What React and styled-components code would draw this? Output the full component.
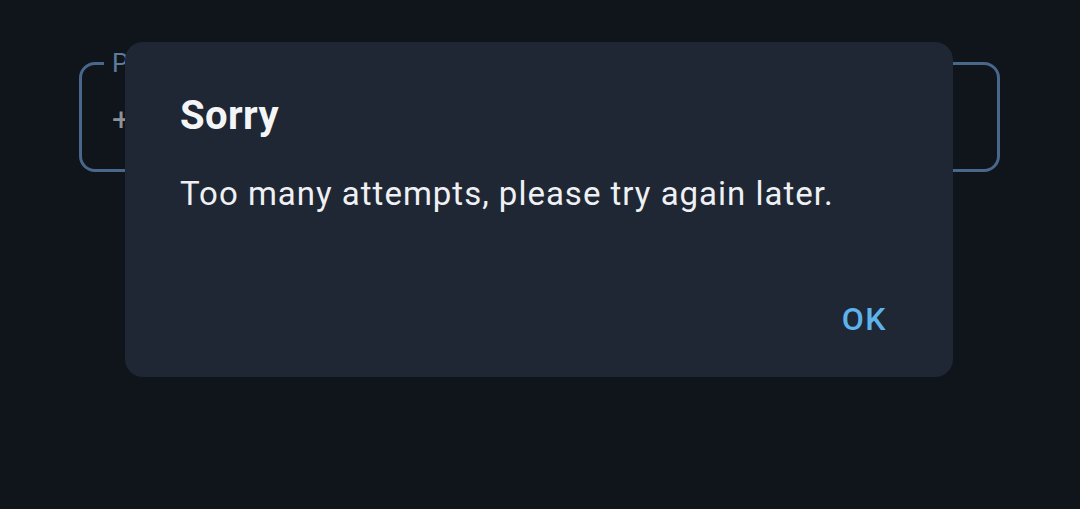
import React from "react";
import styled, { createGlobalStyle } from "styled-components";

const Global = createGlobalStyle`
  html, body { margin: 0; padding: 0; background: #10141b; }
  body { font-family: Roboto, "Noto Sans", "Liberation Sans", sans-serif; }
  #root { width: 1080px; height: 509px; }
`;

const Page = styled.div`
  position: relative;
  width: 1080px;
  height: 509px;
  background: #10141b;
  padding: 62px 80px 0 79px;
  box-sizing: border-box;
  overflow: hidden;
`;

const Field = styled.div`
  position: relative;
  height: 110px;
  box-sizing: border-box;
  border: 3px solid #48678a;
  border-radius: 16px;
  display: flex;
  align-items: center;
  padding-left: 30px;
`;

const FieldLabel = styled.span`
  position: absolute;
  top: -16px;
  left: 22px;
  padding: 0 8px;
  background: #10141b;
  color: #5b7c9c;
  font-size: 26px;
  line-height: 28px;
`;

const Prefix = styled.span`
  color: #8e9196;
  font-size: 32px;
  line-height: 36px;
  margin-top: 4px;
`;

const Overlay = styled.div`
  position: absolute;
  inset: 0;
  display: flex;
  justify-content: center;
  align-items: flex-start;
  padding: 42px 2px 0 0;
`;

const Dialog = styled.div`
  width: 828px;
  height: 335px;
  box-sizing: border-box;
  background: #1f2734;
  border-radius: 18px;
  padding: 50px 66px 38px 55px;
  display: flex;
  flex-direction: column;
`;

const Title = styled.h2`
  margin: 0;
  color: #f3f5f7;
  font-size: 40px;
  line-height: 48px;
  font-weight: 700;
  letter-spacing: 0.4px;
`;

const Message = styled.p`
  margin: 34px 0 0 0;
  color: #eef0f3;
  font-size: 33px;
  line-height: 40px;
  font-weight: 400;
  letter-spacing: 1px;
`;

const Actions = styled.div`
  margin-top: auto;
  display: flex;
  justify-content: flex-end;
`;

const TextButton = styled.button`
  background: none;
  border: none;
  padding: 0;
  color: #5eb3ec;
  font-family: inherit;
  font-size: 32px;
  line-height: 40px;
  font-weight: 500;
  letter-spacing: 1.5px;
  cursor: pointer;
`;

export default function App() {
  return (
    <>
      <Global />
      <Page>
        <Field>
          <FieldLabel>Phone number</FieldLabel>
          <Prefix>+1</Prefix>
        </Field>
        <Overlay>
          <Dialog>
            <Title>Sorry</Title>
            <Message>Too many attempts, please try again later.</Message>
            <Actions>
              <TextButton>OK</TextButton>
            </Actions>
          </Dialog>
        </Overlay>
      </Page>
    </>
  );
}
